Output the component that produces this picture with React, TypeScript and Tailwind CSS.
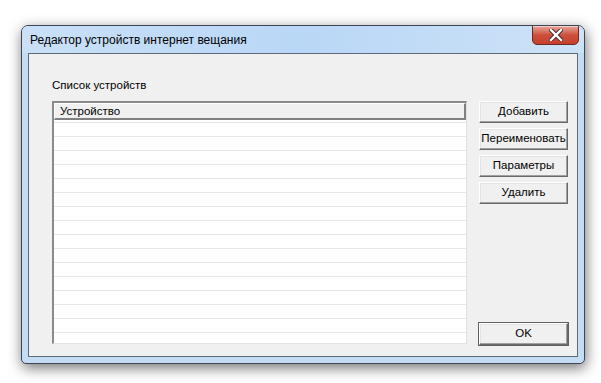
import React from "react";

const rows = Array.from({ length: 16 });

function WinButton({ label, isDefault = false }: { label: string; isDefault?: boolean }) {
    return (
        <button
            className={`w-[89px] h-[22px] flex items-center justify-center bg-[#f0f0f0] text-[11.5px] text-black border border-t-white border-l-white border-r-[#696969] border-b-[#696969] shadow-[inset_-1px_-1px_0_#a0a0a0,inset_1px_1px_0_#e3e3e3] ${
                isDefault ? "outline outline-1 outline-[#000000]/60" : ""
            }`}
        >
            {label}
        </button>
    );
}

export default function App() {
    return (
        <div className="w-[601px] h-[383px] bg-white pl-[21px] pt-[25px] font-['Liberation_Sans',Arial,sans-serif]">
            <div className="w-[564px] h-[339px] flex flex-col rounded-t-[7px] rounded-b-[5px] border border-[#3c4654] bg-[#c4dcf4] shadow-[1px_4px_14px_rgba(0,0,0,0.55)] overflow-hidden">
                {/* title bar */}
                <div className="h-[27px] shrink-0 flex items-start bg-gradient-to-r from-[#c9e0f7] via-[#b9d7f6] to-[#cde2f7] relative">
                    <span className="pl-[8px] pt-[7px] text-[12px] text-black leading-[14px]">
                        Редактор устройств интернет вещания
                    </span>
                    <div className="absolute right-[5px] top-[-1px] w-[47px] h-[20px] rounded-b-[5px] border border-[#6b2a24] bg-gradient-to-b from-[#e8a59a] via-[#cc4f3c] to-[#c63f2c] flex items-center justify-center shadow-[inset_0_1px_0_rgba(255,255,255,0.5)]">
                        <svg width="14" height="12" viewBox="0 0 14 12">
                            <path
                                d="M2 1 L12 11 M12 1 L2 11"
                                stroke="#3a2b2b"
                                strokeWidth="4.2"
                                strokeLinecap="square"
                            />
                            <path
                                d="M2 1 L12 11 M12 1 L2 11"
                                stroke="#ffffff"
                                strokeWidth="2.4"
                                strokeLinecap="square"
                            />
                        </svg>
                    </div>
                </div>
                {/* client area */}
                <div className="mx-[6px] mb-[6px] flex-1 border border-[#5c6a7a] bg-[#f0f0f0] flex pl-[23px] pt-[24px]">
                    <div className="flex flex-col w-[415px]">
                        <span className="h-[14px] text-[11.5px] leading-[14px] text-black">Список устройств</span>
                        <div className="mt-[9px] h-[243px] bg-white border-t-2 border-l-2 border-t-[#8a8a8a] border-l-[#8a8a8a] border-r border-b border-r-[#e3e3e3] border-b-[#e3e3e3] flex flex-col overflow-hidden">
                            <div className="h-[17px] shrink-0 bg-[#f0f0f0] border-r-2 border-b-2 border-r-[#808080] border-b-[#808080] border-t border-l border-t-white border-l-white text-[11.5px] leading-[14px] pl-[5px] text-black">
                                Устройство
                            </div>
                            <div className="h-[3px] shrink-0 border-b border-[#e8e8e8]" />
                            {rows.map((_, i) => (
                                <div key={i} className="h-[14px] shrink-0 border-b border-[#e8e8e8]" />
                            ))}
                        </div>
                    </div>
                    <div className="ml-[12px] mt-[23px] mb-[11px] flex flex-col gap-[5px]">
                        <WinButton label="Добавить" />
                        <WinButton label="Переименовать" />
                        <WinButton label="Параметры" />
                        <WinButton label="Удалить" />
                        <div className="mt-auto">
                            <WinButton label="OK" isDefault />
                        </div>
                    </div>
                </div>
            </div>
        </div>
    );
}
